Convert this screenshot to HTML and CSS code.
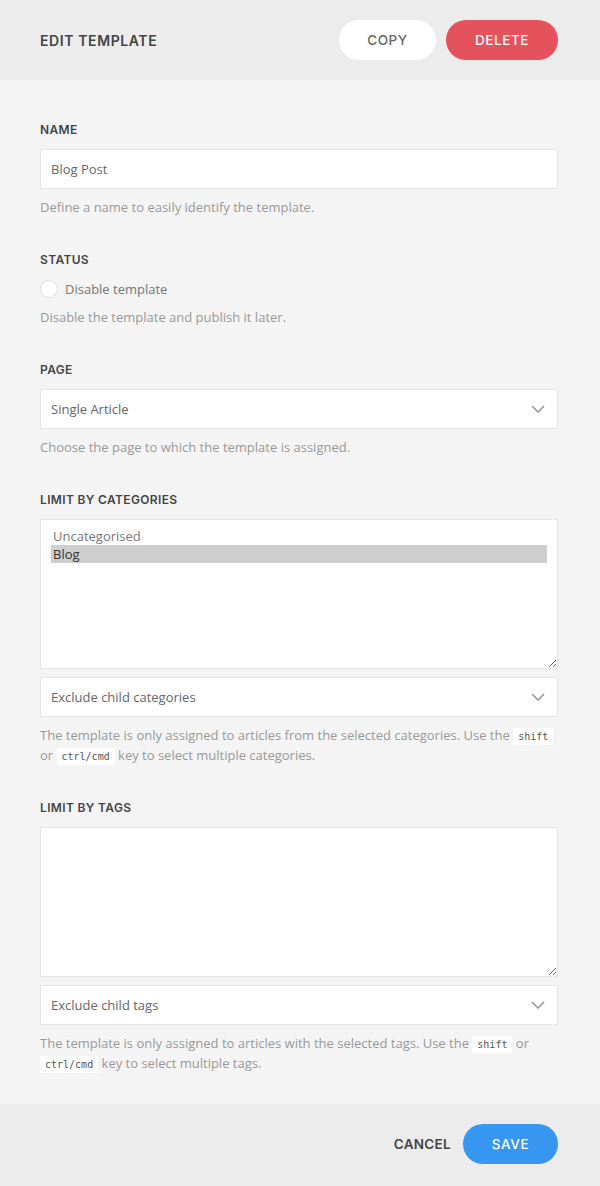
FILE: index.html
```html
<!DOCTYPE html>
<html lang="en">
<head>
<meta charset="utf-8">
<title>Edit Template</title>
<link rel="stylesheet" href="styles.css">
</head>
<body>
<div class="modal">
  <header class="modal-header">
    <h1 class="modal-title">Edit Template</h1>
    <div class="header-actions">
      <button class="btn btn-white">Copy</button>
      <button class="btn btn-danger">Delete</button>
    </div>
  </header>

  <main class="modal-body">
    <section class="field">
      <div class="field-label">Name</div>
      <div class="input">Blog Post</div>
      <p class="help">Define a name to easily identify the template.</p>
    </section>

    <section class="field">
      <div class="field-label">Status</div>
      <label class="radio-row"><span class="radio"></span><span>Disable template</span></label>
      <p class="help">Disable the template and publish it later.</p>
    </section>

    <section class="field">
      <div class="field-label">Page</div>
      <div class="input select">
        <span>Single Article</span>
        <svg class="chevron" width="14" height="8" viewBox="0 0 14 8"><polyline points="1,1 7,7 13,1" fill="none" stroke="#999" stroke-width="1.6"/></svg>
      </div>
      <p class="help">Choose the page to which the template is assigned.</p>
    </section>

    <section class="field">
      <div class="field-label">Limit by Categories</div>
      <div class="multi">
        <div class="option">Uncategorised</div>
        <div class="option selected">Blog</div>
      </div>
      <div class="input select spaced">
        <span>Exclude child categories</span>
        <svg class="chevron" width="14" height="8" viewBox="0 0 14 8"><polyline points="1,1 7,7 13,1" fill="none" stroke="#999" stroke-width="1.6"/></svg>
      </div>
      <p class="help">The template is only assigned to articles from the selected categories. Use the <code>shift</code> or <code>ctrl/cmd</code> key to select multiple categories.</p>
    </section>

    <section class="field">
      <div class="field-label">Limit by Tags</div>
      <div class="multi"></div>
      <div class="input select spaced">
        <span>Exclude child tags</span>
        <svg class="chevron" width="14" height="8" viewBox="0 0 14 8"><polyline points="1,1 7,7 13,1" fill="none" stroke="#999" stroke-width="1.6"/></svg>
      </div>
      <p class="help">The template is only assigned to articles with the selected tags. Use the <code>shift</code> or <code>ctrl/cmd</code> key to select multiple tags.</p>
    </section>
  </main>

  <footer class="modal-footer">
    <button class="btn btn-text">Cancel</button>
    <button class="btn btn-primary">Save</button>
  </footer>
</div>
</body>
</html>
```

FILE: styles.css
```css
* { box-sizing: border-box; }

html, body {
  margin: 0;
  padding: 0;
  background: #ececec;
}

body {
  font-family: "Open Sans", "Noto Sans", sans-serif;
  color: #666;
}

.modal {
  width: 600px;
  min-height: 1186px;
  display: flex;
  flex-direction: column;
}

.modal-header {
  height: 80px;
  background: #ececec;
  display: flex;
  align-items: center;
  justify-content: space-between;
  padding: 0 42px 0 40px;
}

.modal-title {
  margin: 0;
  font-family: "Inter", "Lato", sans-serif;
  font-weight: 600;
  font-size: 14px;
  letter-spacing: 0.6px;
  text-transform: uppercase;
  color: #444;
}

.header-actions {
  display: flex;
  gap: 10px;
}

.btn {
  border: none;
  height: 40px;
  border-radius: 20px;
  font-family: "Inter", "Lato", sans-serif;
  font-weight: 500;
  font-size: 13.5px;
  text-transform: uppercase;
  letter-spacing: 0.6px;
  cursor: pointer;
}

.btn-white {
  width: 97px;
  background: #fff;
  color: #666;
}

.btn-danger {
  width: 112px;
  background: #e5525c;
  color: #fff;
}

.btn-primary {
  width: 95px;
  background: #3696f0;
  color: #fff;
}

.btn-text {
  background: transparent;
  color: #444;
  font-weight: 600;
  letter-spacing: 0.3px;
  padding: 0 12px 0 0;
}

.modal-body {
  background: #f4f4f4;
  padding: 41px 42px 31px 40px;
  display: flex;
  flex-direction: column;
  gap: 34px;
}

.field {
  display: flex;
  flex-direction: column;
}

.field-label {
  font-family: "Inter", "Lato", sans-serif;
  font-weight: 600;
  font-size: 12px;
  letter-spacing: 0.35px;
  line-height: 18px;
  text-transform: uppercase;
  color: #444;
  margin-bottom: 10px;
}

.input {
  height: 40px;
  background: #fff;
  border: 1px solid #e5e5e5;
  padding: 0 10px;
  display: flex;
  align-items: center;
  font-size: 13px;
  color: #666;
}

.select {
  justify-content: space-between;
}

.select .chevron {
  margin-right: 2px;
}

.spaced {
  margin-top: 8px;
}

.help {
  margin: 8px 0 0;
  font-size: 13px;
  line-height: 20px;
  color: #999;
}

.help code {
  font-family: "DejaVu Sans Mono", "Liberation Mono", monospace;
  font-size: 10px;
  line-height: 10px;
  color: #555;
  background: #fff;
  padding: 3px 5px;
}

.radio-row {
  display: flex;
  align-items: center;
  gap: 7px;
  height: 20px;
  font-size: 13px;
  color: #777;
}

.radio {
  width: 18px;
  height: 18px;
  border-radius: 50%;
  background: #fff;
  border: 1px solid #ddd;
}

.multi {
  height: 150px;
  background: #fff;
  border: 1px solid #e5e5e5;
  padding: 7px 10px;
  overflow: auto;
  resize: vertical;
}

.option {
  font-size: 13px;
  line-height: 18px;
  padding: 0 2px;
  color: #777;
}

.option.selected {
  background: #cecece;
  color: #333;
}

.modal-footer {
  flex: 1;
  background: #ececec;
  display: flex;
  justify-content: flex-end;
  align-items: flex-start;
  padding: 20px 42px 0 40px;
}
```
